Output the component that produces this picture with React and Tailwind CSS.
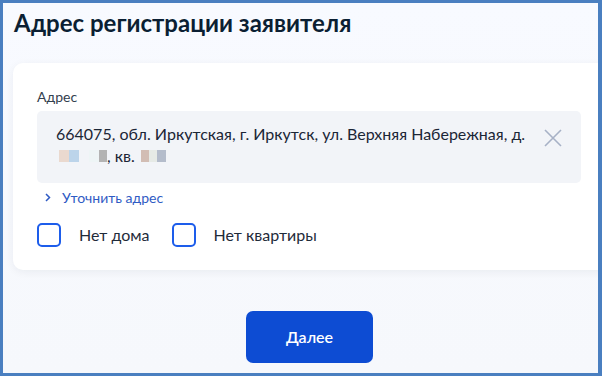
const Blur = ({ className }) => <span className={`inline-block h-[12px] align-middle ${className}`} />;

const Checkbox = ({ label }) => (
  <label className="flex items-center">
    <span className="w-[24px] h-[24px] rounded-[5px] border-2 border-[#1d5deb] bg-white" />
    <span className="ml-[18px] text-[16px] text-[#1f2b3a]">{label}</span>
  </label>
);

const App = () => {
  return (
    <div
      className="w-[602px] h-[376px] overflow-hidden border-[#4a7fc0] border-t-[3px] border-l-[3px] border-b-[3px] border-r-[4px] bg-gradient-to-b from-[#f8faff] to-[#f6f8fc]"
      style={{ fontFamily: 'Lato, "Noto Sans", sans-serif' }}
    >
      {/* Title */}
      <h1 className="pl-[11px] pt-[6px] text-[24px] leading-[28px] font-bold text-[#0b1f33]">
        Адрес регистрации заявителя
      </h1>

      {/* Card */}
      <div className="mt-[26px] ml-[10px] w-[620px] bg-white rounded-l-[10px] shadow-[0_2px_8px_rgba(11,31,51,0.06)] pt-[24px] pb-[23px] pl-[24px]">
        <div className="text-[14px] leading-[20px] text-[#33404e]">Адрес</div>
        <div className="mt-[4px] w-[544px] h-[72px] rounded-[5px] bg-[#f2f4f8] flex items-start pl-[19px] pr-[19px] pt-[12px]">
          <div className="flex-1 text-[16px] leading-[22px] text-[#1b2636]">
            <div>664075, обл. Иркутская, г. Иркутск, ул. Верхняя Набережная, д.</div>
            <div className="flex items-center">
              <Blur className="w-[10px] ml-[3px] bg-[#ead9cf]" />
              <Blur className="w-[10px] bg-[#bcd4ea]" />
              <Blur className="w-[10px] ml-[10px] bg-[#eef5f6]" />
              <Blur className="w-[8px] bg-[#b3b3b3]" />
              <span>, кв.</span>
              <Blur className="w-[8px] ml-[6px] bg-[#d2bdb4]" />
              <Blur className="w-[8px] bg-[#e6eae6]" />
              <Blur className="w-[9px] bg-[#b4bccb]" />
            </div>
          </div>
          <svg width="18" height="18" viewBox="0 0 18 18" className="mt-[6px] ml-[6px]">
            <path d="M1 1L17 17M17 1L1 17" stroke="#a7b1c6" strokeWidth="1.6" />
          </svg>
        </div>

        <a className="mt-[4px] flex items-center h-[20px] text-[14px] text-[#2f5bc4]">
          <svg width="6" height="9" viewBox="0 0 6 9" className="ml-[8px]">
            <path d="M1 1L4.5 4.5L1 8" fill="none" stroke="#2f5bc4" strokeWidth="1.5" />
          </svg>
          <span className="ml-[11px]">Уточнить адрес</span>
        </a>

        <div className="mt-[16px] flex items-center gap-[22px]">
          <Checkbox label="Нет дома" />
          <Checkbox label="Нет квартиры" />
        </div>
      </div>

      {/* Action */}
      <div className="mt-[41px] pl-[243px]">
        <button className="w-[127px] h-[52px] rounded-[7px] bg-[#0d4cd3] text-white text-[16px] font-semibold">
          Далее
        </button>
      </div>
    </div>
  );
};

export default App;
